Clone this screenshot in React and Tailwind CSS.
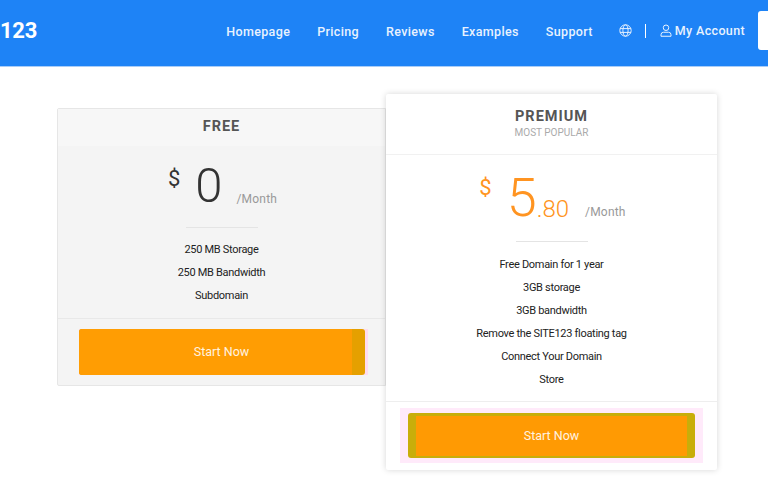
import React from "react";

const navItems = ["Homepage", "Pricing", "Reviews", "Examples", "Support"];
const freeItems = ["250 MB Storage", "250 MB Bandwidth", "Subdomain"];
const premiumItems = [
    "Free Domain for 1 year",
    "3GB storage",
    "3GB bandwidth",
    "Remove the SITE123 floating tag",
    "Connect Your Domain",
    "Store",
];

function GlobeIcon() {
    return (
        <svg className="w-[13px] h-[13px]" viewBox="0 0 24 24" fill="none" stroke="currentColor" strokeWidth="1.8">
            <circle cx="12" cy="12" r="10.5"/>
            <ellipse cx="12" cy="12" rx="4.8" ry="10.5"/>
            <path d="M2 8.5h20M2 15.5h20"/>
        </svg>
    );
}

function UserIcon() {
    return (
        <svg className="w-[12px] h-[13px]" viewBox="0 0 24 26" fill="none" stroke="currentColor" strokeWidth="2">
            <circle cx="12" cy="7.5" r="5.5"/>
            <path d="M2 24.5v-3a5 5 0 015-5h10a5 5 0 015 5v3z"/>
        </svg>
    );
}

function Features({items}) {
    return (
        <ul className="flex flex-col items-center gap-[7px] text-[11px] leading-[16px] tracking-[-0.3px] text-[#222]">
            {items.map(item => <li key={item}>{item}</li>)}
        </ul>
    );
}

function Divider() {
    return <div className="w-[72px] h-px bg-[#e4e4e4] mx-auto"/>;
}

function App() {
    return (
        <div className="w-[768px] h-[483px] overflow-hidden bg-white font-['Roboto','Liberation_Sans',sans-serif]">
            <header className="h-[67px] bg-[#1e83f6] border-b border-[#a9cdf8] flex items-start relative text-white">
                <div className="w-[36px] mt-[18px] text-[22px] leading-[26px] font-bold text-right tracking-[-0.3px]">123</div>
                <nav className="ml-auto mt-[21px] flex items-center text-[12.5px] leading-[17px] font-medium tracking-[0.35px] text-[#e8f2fe]">
                    <div className="flex gap-[27px] mt-[2px]">
                        {navItems.map(item => <a key={item}>{item}</a>)}
                    </div>
                    <span className="ml-[26px]"><GlobeIcon/></span>
                    <span className="ml-[13px] w-px h-[14px] bg-white"/>
                    <span className="ml-[14px]"><UserIcon/></span>
                    <a className="ml-[3px]">My Account</a>
                </nav>
                <div className="ml-[13px] mt-[11px] w-[10px] h-[39px] bg-white rounded-l-[3px] shrink-0"/>
            </header>

            <main className="flex items-start pl-[57px] pt-[27px]">
                <section className="mt-[14px] w-[329px] h-[278px] bg-[#f4f4f4] border border-[#e6e6e6] rounded-l-[2px] flex flex-col">
                    <div className="h-[37px] pb-[2px] bg-[#f7f7f7] flex items-center justify-center text-[14.5px] font-bold tracking-[1px] text-[#555]">FREE</div>
                    <div className="h-[173px] border-b border-[#e8e8e8] flex flex-col">
                        <div className="h-[81px] flex justify-center items-start">
                            <span className="ml-[2px] mt-[19px] text-[22px] leading-[28px] text-[#333]">$</span>
                            <span className="ml-[15px] mt-[9px] text-[49px] leading-[62px] font-light text-[#333]">0</span>
                            <span className="ml-[14px] mt-[44px] text-[12px] leading-[18px] tracking-[0.2px] text-[#999]">/Month</span>
                        </div>
                        <Divider/>
                        <div className="pt-[14px]"><Features items={freeItems}/></div>
                    </div>
                    <div className="flex justify-center pt-[10px] pl-[3px]">
                        <div className="bg-[#ffdcef] pr-[3px]">
                            <button className="w-[286px] h-[46px] bg-[#e5a000] rounded-[3px] overflow-hidden flex">
                                <span className="w-[273px] h-full bg-[#ff9d03] text-[#fff3e0] text-[12.5px] flex items-center justify-center pl-[13px]">Start Now</span>
                            </button>
                        </div>
                    </div>
                </section>

                <section className="w-[331px] h-[376px] bg-white rounded-[2px] shadow-[0_0_6px_rgba(0,0,0,0.16)] relative flex flex-col">
                    <div className="h-[61px] border-b border-[#f1f1f1] flex flex-col items-center pt-[14px]">
                        <div className="text-[14.5px] leading-[18px] font-bold tracking-[1px] text-[#555]">PREMIUM</div>
                        <div className="text-[10px] leading-[14px] text-[#aaa]">MOST POPULAR</div>
                    </div>
                    <div className="h-[86px] flex justify-center items-start">
                        <span className="ml-[2px] mt-[19px] text-[22px] leading-[28px] text-[#ff9421]">$</span>
                        <span className="ml-[15px] mt-[10px] text-[54px] leading-[66px] font-light text-[#ff9421]">5</span>
                        <span className="mt-[40px] text-[24px] leading-[28px] font-light text-[#ff9421]">.80</span>
                        <span className="ml-[16px] mt-[48px] text-[12px] leading-[18px] tracking-[0.2px] text-[#999]">/Month</span>
                    </div>
                    <Divider/>
                    <div className="h-[160px] border-b border-[#eee] pt-[15px]"><Features items={premiumItems}/></div>
                    <div className="flex justify-center pt-[6px]">
                        <div className="bg-[#ffeafa] px-[8px] py-[5px]">
                            <button className="w-[287px] h-[45px] bg-[#c8ae0a] rounded-[3px] px-[8px] pt-[3px] pb-[2px] flex">
                                <span className="w-full h-full bg-[#ff9a03] text-[#fff3e0] text-[12.5px] flex items-center justify-center">Start Now</span>
                            </button>
                        </div>
                    </div>
                </section>
            </main>
        </div>
    );
}

export default App;
